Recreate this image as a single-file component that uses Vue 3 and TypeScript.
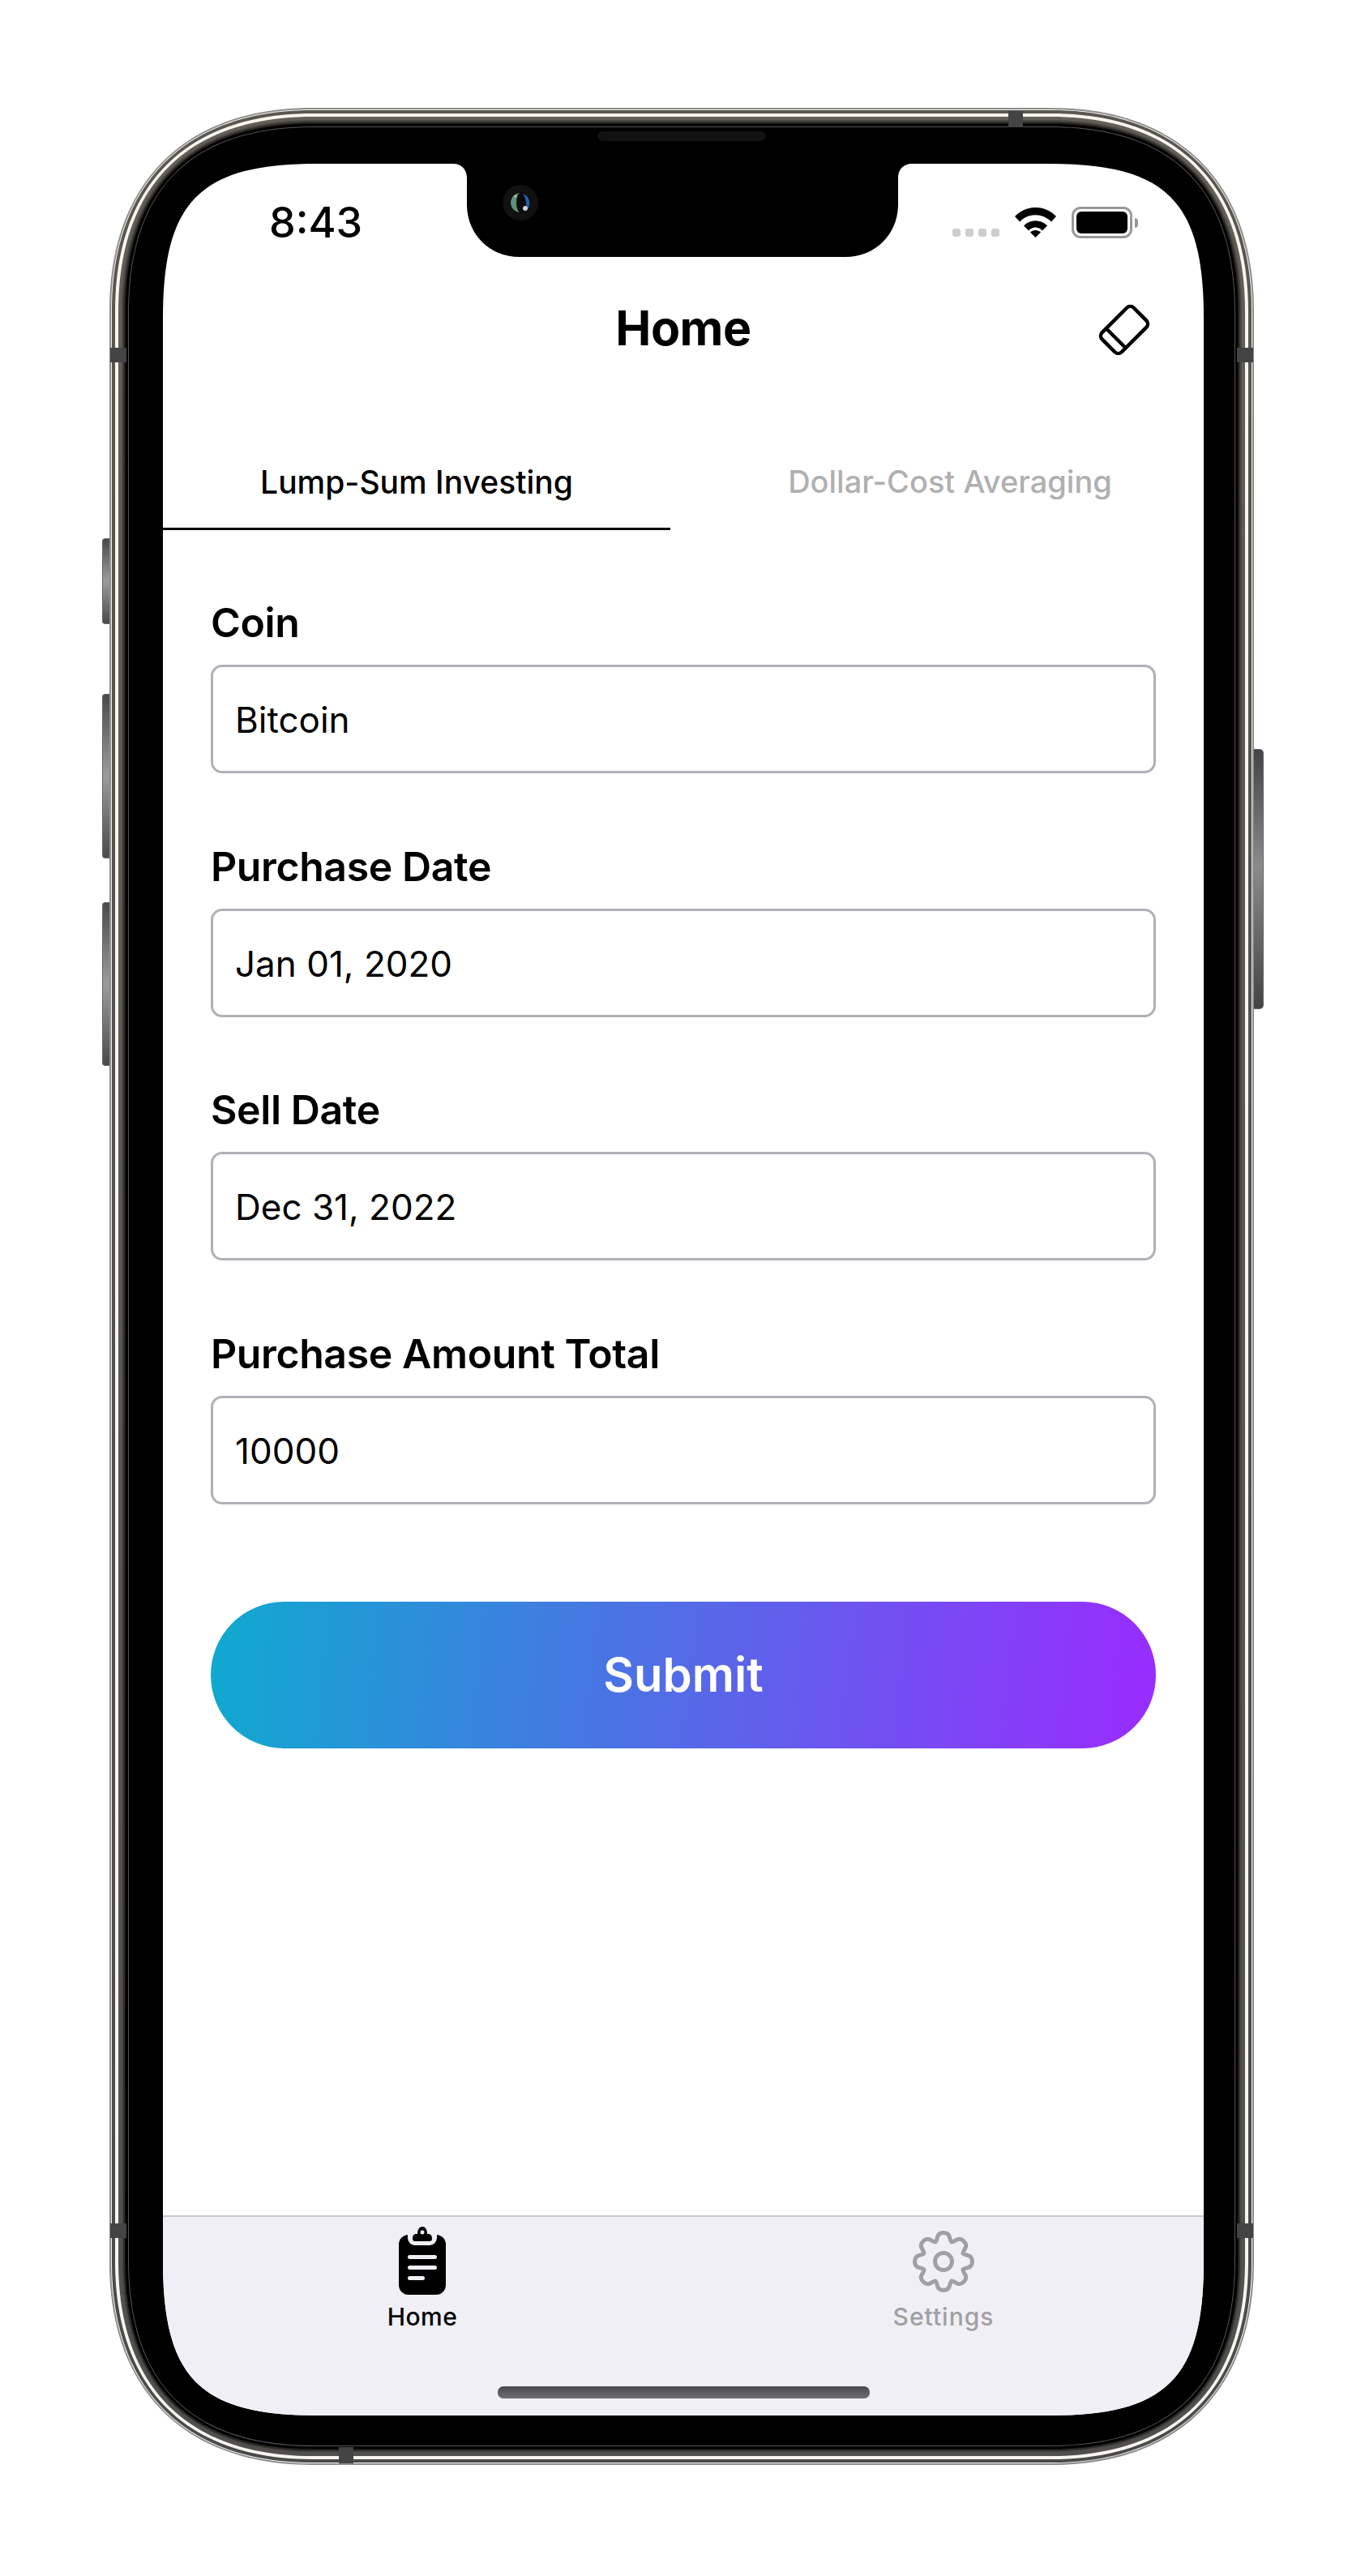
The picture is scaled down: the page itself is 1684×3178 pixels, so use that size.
<template>
  <div class="page">
    <div class="phone">
      <div class="side-btn mute"></div>
      <div class="side-btn vol-up"></div>
      <div class="side-btn vol-down"></div>
      <div class="side-btn power"></div>

      <svg class="frame" width="1412" height="2908" viewBox="0 0 1412 2908">
        <defs>
          <linearGradient id="metal-a" x1="0" y1="0" x2="0" y2="1">
            <stop offset="0" stop-color="#5a5750" />
            <stop offset="1" stop-color="#4a4a4a" />
          </linearGradient>
          <linearGradient id="metal-b" x1="0" y1="0" x2="0" y2="1">
            <stop offset="0" stop-color="#625f58" />
            <stop offset="1" stop-color="#505050" />
          </linearGradient>
        </defs>
        <path v-for="l in frameLayers" :key="l.inset" :d="l.d" :fill="l.fill" />
        <!-- antenna bands -->
        <rect x="1109" y="4" width="18" height="20" fill="#444" />
        <rect x="1391" y="296" width="20" height="18" fill="#444" />
        <rect x="1" y="296" width="20" height="18" fill="#444" />
        <rect x="1391" y="2610" width="20" height="18" fill="#444" />
        <rect x="1" y="2610" width="20" height="18" fill="#444" />
        <rect x="283" y="2886" width="18" height="20" fill="#444" />
        <rect x="603" y="30" width="206" height="10" rx="5" fill="#111" stroke="#1c1c1c" />
      </svg>

      <div class="screen" :style="{ clipPath: screenClip }">
        <svg class="notch" width="1284" height="120" viewBox="0 0 1284 120">
          <path d="M358 0C368 0 375 7 375 17V50C375 87 403 115 440 115H842C879 115 907 87 907 50V17C907 7 914 0 924 0Z" fill="#000" />
          <circle cx="441" cy="48" r="22" fill="#111" />
          <circle cx="441" cy="48" r="13" fill="#0a0a0a" />
          <path d="M441 36A12 12 0 0 0 441 60A5 12 0 0 1 441 36Z" fill="#5c9078" />
          <path d="M444 37A12 12 0 0 1 446 59C450 52 448 43 444 37Z" fill="#1d5ea8" />
          <circle cx="447" cy="55" r="3" fill="#cfd0e0" />
          <circle cx="435" cy="40" r="1.6" fill="#b8c8c0" />
        </svg>

        <div class="status">
          <span class="time">8:43</span>
          <div class="status-icons">
            <div class="dots"><i></i><i></i><i></i><i></i></div>
            <svg width="51" height="37" viewBox="0 0 51 37">
              <path d="M0 11C14-3.7 37-3.7 51 11L45 17.5C34 6.5 17 6.5 6 17.5Z" />
              <path d="M11 22.500C19 14 32 14 40 22.500L34 28.500C29 23 22 23 17 28.500Z" />
              <path d="M25.500 37L19 30.500C22.500 27 28.500 27 32 30.500Z" />
            </svg>
            <div class="battery"><div class="battery-fill"></div></div>
          </div>
        </div>

        <div class="nav">
          <span></span>
          <h1 class="title">Home</h1>
          <svg class="eraser" width="70" height="70" viewBox="0 0 70 70">
            <g transform="rotate(-45 35 35)" fill="none" stroke="#000" stroke-width="4.5">
              <rect x="7.500" y="18" width="55" height="34" rx="6" />
              <line x1="20.500" y1="18" x2="20.500" y2="52" />
            </g>
          </svg>
        </div>

        <div class="tabs">
          <div class="tab active">Lump-Sum Investing</div>
          <div class="tab">Dollar-Cost Averaging</div>
        </div>

        <div class="form">
          <div v-for="f in fields" :key="f.label" class="field">
            <label class="field-label">{{ f.label }}</label>
            <div class="field-input">{{ f.value }}</div>
          </div>
          <button class="submit">Submit</button>
        </div>

        <div class="tabbar">
          <div class="tabbar-item">
            <div class="tabbar-icon home-icon">
              <svg width="60" height="90" viewBox="0 0 60 90">
                <rect x="1" y="12" width="58" height="74" rx="12" fill="#000" />
                <rect x="12" y="0" width="36" height="25" rx="9" fill="#f0eff5" />
                <path d="M18 17C18 12.500 20 11 23 11H24C24 6 26 2 30 2C34 2 36 6 36 11H37C40 11 42 12.500 42 17C42 19 41 20 39 20H21C19 20 18 19 18 17Z" fill="#000" />
                <circle cx="30" cy="9" r="2.500" fill="#f0eff5" />
                <rect x="12" y="37" width="36" height="5" rx="2.500" fill="#f0eff5" />
                <rect x="12" y="50" width="36" height="5" rx="2.500" fill="#f0eff5" />
                <rect x="12" y="63" width="21" height="5" rx="2.500" fill="#f0eff5" />
              </svg>
            </div>
            <span class="tabbar-label on">Home</span>
          </div>
          <div class="tabbar-item">
            <div class="tabbar-icon">
              <svg width="80" height="80" viewBox="0 0 80 80" fill="none" stroke="#a0a0a2" stroke-width="5">
                <path :d="gearPath" stroke-linejoin="round" />
                <circle cx="40" cy="40" r="10.500" />
              </svg>
            </div>
            <span class="tabbar-label">Settings</span>
          </div>
          <div class="home-indicator"></div>
        </div>
      </div>
    </div>
  </div>
</template>

<script setup lang="ts">
const fields = [
  { label: 'Coin', value: 'Bitcoin' },
  { label: 'Purchase Date', value: 'Jan 01, 2020' },
  { label: 'Sell Date', value: 'Dec 31, 2022' },
  { label: 'Purchase Amount Total', value: '10000' },
];

// rounded rect with long, soft iOS style corners
function softRect(x: number, y: number, w: number, h: number, p: number, d: number): string {
  const c = (8 * d - p) / 3;
  const r = x + w;
  const b = y + h;
  return `M${x + p} ${y}H${r - p}C${r - c} ${y} ${r} ${y + c} ${r} ${y + p}V${b - p}` +
    `C${r} ${b - c} ${r - c} ${b} ${r - p} ${b}H${x + p}C${x + c} ${b} ${x} ${b - c} ${x} ${b - p}` +
    `V${y + p}C${x} ${y + c} ${x + c} ${y} ${x + p} ${y}Z`;
}

const bands: [number, string][] = [
  [0, '#8e8e8e'],
  [2, '#f2f2f2'],
  [3, 'url(#metal-a)'],
  [7, '#f7f5ee'],
  [11, 'url(#metal-b)'],
  [15, '#4c4a45'],
  [17, '#2e2d2a'],
  [19, '#121211'],
  [20, '#000000'],
  [23, '#555555'],
  [24, '#000000'],
];

const frameLayers = bands.map(([inset, fill]) => {
  const t = inset / 68;
  const p = 250 - 60 * t;
  const d = 66 - 25 * t;
  return { inset, fill, d: softRect(inset, inset, 1412 - inset * 2, 2908 - inset * 2, p, d) };
});

const screenClip = `path('${softRect(0, 0, 1284, 2778, 190, 41)}')`;

function buildGear(): string {
  const pts: [number, number][] = [];
  const rad = Math.PI / 180;
  for (let i = 0; i < 8; i++) {
    const a = i * 45 - 90;
    for (const [r, o] of [[26, -20], [36, -10], [36, 10], [26, 20]]) {
      pts.push([40 + r * Math.cos((a + o) * rad), 40 + r * Math.sin((a + o) * rad)]);
    }
  }
  const mid = (a: [number, number], b: [number, number]) => [(a[0] + b[0]) / 2, (a[1] + b[1]) / 2];
  const first = mid(pts[pts.length - 1], pts[0]);
  let d = `M${first[0].toFixed(2)} ${first[1].toFixed(2)}`;
  pts.forEach((pt, i) => {
    const m = mid(pt, pts[(i + 1) % pts.length]);
    d += `Q${pt[0].toFixed(2)} ${pt[1].toFixed(2)} ${m[0].toFixed(2)} ${m[1].toFixed(2)}`;
  });
  return d + 'Z';
}

const gearPath = buildGear();
</script>

<style>
html, body {
  margin: 0;
  background: #fff;
}
</style>

<style scoped>
.page {
  width: 1684px;
  height: 3178px;
  padding: 133px 137px 137px 135px;
  box-sizing: border-box;
  background: #fff;
  font-family: Inter, "Noto Sans", sans-serif;
  color: #000;
}

.phone {
  position: relative;
  width: 1412px;
  height: 2908px;
  padding: 69px 62px 61px 66px;
  box-sizing: border-box;
}

.frame {
  position: absolute;
  left: 0;
  top: 0;
}

.side-btn {
  position: absolute;
  left: -9px;
  width: 10px;
  border: 1px solid #666;
  border-right: 0;
  border-radius: 4px 0 0 4px;
  background: linear-gradient(#4a4a4a, #9c9c9c 50%, #4a4a4a);
}
.mute { top: 531px; height: 104px; }
.vol-up { top: 723px; height: 201px; }
.vol-down { top: 980px; height: 200px; }
.power {
  left: auto;
  right: -12px;
  top: 791px;
  width: 13px;
  height: 319px;
  border: 1px solid #666;
  border-left: 0;
  border-radius: 0 5px 5px 0;
  background: linear-gradient(#444, #8a8a8a 45%, #444);
}

.screen {
  position: relative;
  width: 1284px;
  height: 2778px;
  background: #fff;
  display: flex;
  flex-direction: column;
}

.notch {
  position: absolute;
  left: 0;
  top: 0;
}

.status {
  height: 135px;
  padding: 9px 81px 0 131px;
  box-sizing: border-box;
  display: flex;
  justify-content: space-between;
  align-items: center;
}
.time {
  font-size: 52px;
  font-weight: 500;
}
.status-icons {
  display: flex;
  align-items: center;
  gap: 19px;
}
.dots {
  display: flex;
  gap: 6px;
  margin-top: 26px;
}
.dots i {
  width: 10px;
  height: 10px;
  border-radius: 3px;
  background: #cdcdcd;
}
.battery {
  position: relative;
  width: 75px;
  height: 39px;
  margin-right: 7px;
  padding: 3px;
  box-sizing: border-box;
  border: 3px solid #999;
  border-radius: 11px;
}
.battery::after {
  content: "";
  position: absolute;
  right: -10px;
  top: 11px;
  width: 4px;
  height: 12px;
  border-radius: 0 6px 6px 0;
  background: #999;
}
.battery-fill {
  width: 100%;
  height: 100%;
  background: #000;
  border-radius: 6px;
}

.nav {
  height: 136px;
  padding-right: 63px;
  display: grid;
  grid-template-columns: 1fr auto 1fr;
  align-items: center;
}
.title {
  margin: 0 0 0 63px;
  font-size: 59px;
  font-weight: 700;
  line-height: 68px;
  letter-spacing: -0.5px;
}
.eraser {
  justify-self: end;
  margin-top: 3px;
}

.tabs {
  margin-top: 61px;
  display: flex;
  justify-content: space-between;
}
.tab {
  width: 626px;
  height: 120px;
  box-sizing: border-box;
  display: flex;
  align-items: center;
  justify-content: center;
  font-size: 38px;
  font-weight: 500;
  color: #b0b0b0;
}
.tab.active {
  padding-top: 3px;
  font-size: 39px;
  color: #000;
  border-bottom: 3px solid #000;
}

.form {
  padding: 84px 59px 0;
  display: flex;
  flex-direction: column;
  gap: 84.5px;
}
.field {
  display: flex;
  flex-direction: column;
  gap: 22px;
}
.field-label {
  font-size: 50px;
  font-weight: 600;
  line-height: 60px;
  letter-spacing: -0.4px;
}
.field-input {
  height: 134px;
  padding: 2px 27px 0;
  box-sizing: border-box;
  display: flex;
  align-items: center;
  border: 3px solid #b0b1b6;
  border-radius: 14px;
  font-size: 44px;
}
.submit {
  height: 181px;
  margin-top: 35.5px;
  border: 0;
  border-radius: 91px;
  background: linear-gradient(96deg, #0eaacf, #9a2bff);
  color: #fff;
  font-family: inherit;
  font-size: 58px;
  font-weight: 600;
}

.tabbar {
  position: relative;
  margin-top: auto;
  height: 247px;
  box-sizing: border-box;
  border-top: 2px solid #c9c9cd;
  background: #f0eff5;
  display: grid;
  grid-template-columns: 1fr 1fr;
}
.tabbar-item {
  padding-top: 9px;
  display: flex;
  flex-direction: column;
  align-items: center;
}
.tabbar-icon {
  height: 92px;
  display: flex;
  align-items: center;
}
.home-icon {
  margin-right: 3px;
}
.tabbar-label {
  margin-top: 2px;
  font-size: 30px;
  font-weight: 500;
  line-height: 40px;
  letter-spacing: 1px;
  color: #a0a0a2;
}
.tabbar-label.on {
  margin-right: 2px;
  letter-spacing: 0.5px;
  color: #000;
}
.home-indicator {
  position: absolute;
  left: 413px;
  top: 209px;
  width: 459px;
  height: 15px;
  border-radius: 7px;
  background: linear-gradient(#48484a, #707072);
}
</style>
